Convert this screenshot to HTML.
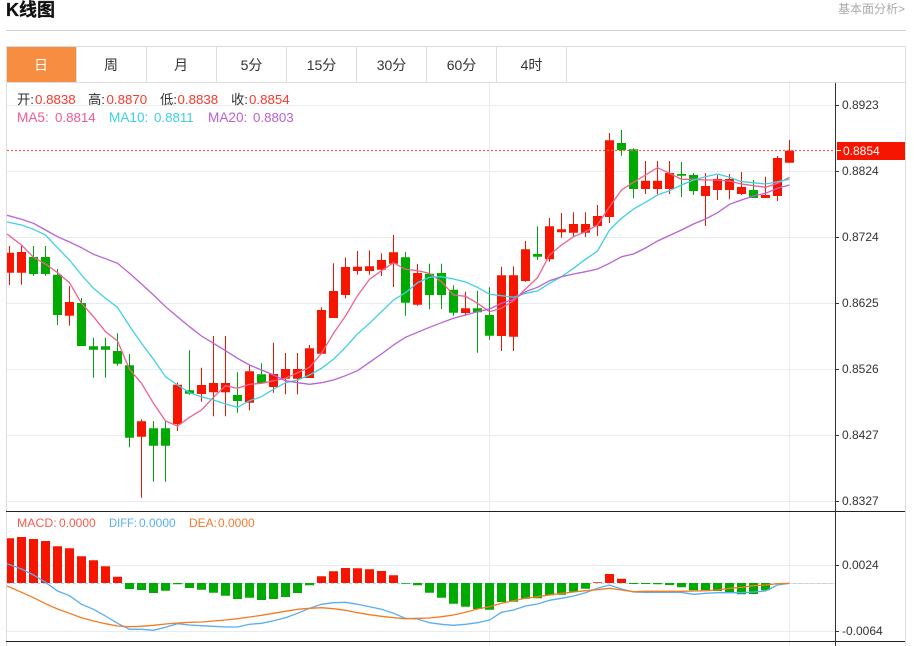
<!DOCTYPE html>
<html lang="zh"><head><meta charset="utf-8"><title>K线图</title>
<style>
html,body{margin:0;padding:0;background:#fff;width:914px;height:646px;overflow:hidden}
svg{display:block;position:absolute;left:0;top:0}
text{font-family:"Liberation Sans","Noto Sans CJK SC",sans-serif}
</style></head><body>
<svg width="914" height="646" viewBox="0 0 914 646" xmlns="http://www.w3.org/2000/svg">
<defs><clipPath id="c"><rect x="7" y="83" width="828" height="563"/></clipPath></defs>
<text x="6" y="16" font-size="18" font-weight="700" fill="#111" stroke="#111" stroke-width=".3">K线图</text>
<text x="838" y="13" font-size="12" fill="#aaa">基本面分析&gt;</text>
<path d="M6 30.5H906" stroke="#d0d0d0" fill="none"/>
<!-- tabs -->
<rect x="7" y="47" width="69" height="35" fill="#f68d41"/>
<path d="M6 46.5H906M6 82.5H906M6.5 46V646M905.500 46V646M76.5 47V82M146.5 47V82M216.5 47V82M286.5 47V82M356.5 47V82M426.5 47V82M496.5 47V82M566.5 47V82" stroke="#dddddd" fill="none"/>
<g font-size="14" fill="#333" text-anchor="middle">
<text x="41" y="70" fill="#fff">日</text><text x="111" y="70">周</text><text x="181" y="70">月</text><text x="251.5" y="70">5分</text><text x="321.5" y="70">15分</text><text x="391.5" y="70">30分</text><text x="461.5" y="70">60分</text><text x="531.5" y="70">4时</text>
</g>
<!-- grid -->
<path d="M7 105.5H835M7 171.5H835M7 237.5H835M7 303.5H835M7 369.5H835M7 435.5H835M7 501.5H835M7 565.5H835M7 631.5H835M489.5 83V646M789.5 83V646" stroke="#e6edf2" fill="none"/>
<path d="M7 583.5H835" stroke="#a8daf0" stroke-dasharray="3 3" fill="none"/>
<path d="M790 583.5H835" stroke="#f3b4a8" stroke-dasharray="3 3" fill="none" opacity=".6"/>
<g clip-path="url(#c)">
<!-- wicks -->
<path fill="none" stroke="#ee1500" d="M9.5 246V285M21.5 246V284.7M69.5 286V325.7M141.5 419.3V497.7M177.5 382.3V431M201.5 367.7V401.7M213.5 336V416.3M225.5 336V416.3M249.5 365.3V410.3M273.5 342.7V392.7M285.5 353V394.3M297.5 353V394.3M309.5 345V378M321.5 307.3V353.7M333.5 263.3V318M345.5 257.7V298.3M357.5 251V274.7M369.5 250.3V274.7M381.5 253.3V276M393.5 235V287M417.5 264V305.7M465.5 291.7V315.7M501.5 266.7V351M513.5 266.3V351M525.5 241V281.7M549.5 218V261.7M561.5 213V237.7M573.5 212.3V237M585.5 212.3V237M597.5 205V236M609.5 133V223M645.5 161V194M657.5 161V194M669.5 161V194M705.5 173V226M717.5 175V200M729.5 174V199.3M741.5 172V195M765.5 176.7V198M777.5 156V201M789.5 140V162.7"/>
<path fill="none" stroke="#009f10" d="M33.5 246V275.7M45.5 246V275.7M57.5 269V325M81.5 298V346M93.5 337.7V377.7M105.5 337.7V377.7M117.5 333.3V365.7M129.5 354V447.3M153.5 421V481.7M165.5 421V481.7M189.5 350.3V394.7M237.5 372.3V412.7M261.5 363.3V384M405.5 252V315.7M429.5 263.7V309.3M441.5 263.7V309M453.5 285.3V315.7M477.5 291V352.7M489.5 287.3V339.7M537.5 226.3V260M621.5 130V155.7M633.5 148.3V198.3M681.5 162V197M693.5 173V195M753.5 180V198"/>
<!-- bodies -->
<path fill="#f61600" d="M5 252.7h9V272.7h-9zM17 252h9V272.7h-9zM65 302h9V315.7h-9zM137 421.3h9V436.7h-9zM173 384.7h9V424h-9zM197 385h9V394h-9zM209 383h9V392.3h-9zM221 383h9V392.3h-9zM245 371.3h9V402.7h-9zM269 374h9V387h-9zM281 369h9V378.7h-9zM293 369h9V378.7h-9zM305 348.3h9V378h-9zM317 310h9V353.7h-9zM329 291h9V318h-9zM341 267h9V295h-9zM353 266.7h9V271h-9zM365 266.3h9V271h-9zM377 260h9V269.7h-9zM389 252.3h9V263.7h-9zM413 273h9V304.7h-9zM461 308.3h9V313h-9zM497 275.3h9V336h-9zM509 275.3h9V336.7h-9zM521 249.3h9V281h-9zM545 226.3h9V259.3h-9zM557 229.3h9V232.3h-9zM569 224h9V232.7h-9zM581 224h9V232.7h-9zM593 216h9V226h-9zM605 140.3h9V217h-9zM641 180.7h9V189h-9zM653 180.7h9V189h-9zM665 173h9V189h-9zM701 186h9V196h-9zM713 179h9V190h-9zM725 179h9V190h-9zM737 187h9V194h-9zM761 195h9V198h-9zM773 158h9V196h-9zM785 150.7h9V162.7h-9z"/>
<path fill="#00aa00" d="M29 257h9V274h-9zM41 257h9V274h-9zM53 274.7h9V315h-9zM77 303h9V346h-9zM89 346.3h9V349.7h-9zM101 346.3h9V349.7h-9zM113 351h9V363.7h-9zM125 365.3h9V437.7h-9zM149 428.3h9V445.7h-9zM161 428.3h9V445.7h-9zM185 390.3h9V393.7h-9zM233 395h9V401h-9zM257 374.3h9V383.3h-9zM401 257.3h9V302.7h-9zM425 273.7h9V295h-9zM437 273h9V295h-9zM449 289.7h9V312.7h-9zM473 308.3h9V312.3h-9zM485 315h9V335.7h-9zM533 254h9V256.7h-9zM617 143h9V150.3h-9zM629 149.3h9V189h-9zM677 174h9V175.7h-9zM689 175h9V191h-9zM749 190h9V198h-9z"/>
<!-- MA lines -->
<polyline fill="none" stroke="#f0608f" stroke-width="1.3" points="7,234 21.5,245 33.5,257.3 45.5,264 57.5,272.7 69.5,282.7 81.5,303.3 93.5,316.7 105.5,331.7 117.5,341 129.5,369.3 141.5,383.3 153.5,403.3 165.5,421 177.5,426 189.5,417.3 201.5,410 213.5,397.3 225.5,385.7 237.5,388.3 249.5,384.3 261.5,383.3 273.5,380.7 285.5,378.3 297.5,372.7 309.5,367.3 321.5,353.3 333.5,333.3 345.5,316 357.5,295.7 369.5,279.3 381.5,270.7 393.5,262.7 405.5,269.3 417.5,270.7 429.5,273.3 441.5,281.7 453.5,295 465.5,296.3 477.5,303.3 489.5,311.7 501.5,308.3 513.5,300.7 525.5,289 537.5,277.7 549.5,255 561.5,245 573.5,236.7 585.5,231.7 597.5,225 609.5,206.7 621.5,190 633.5,182.3 645.5,175 657.5,167.7 669.5,173.3 681.5,179.3 693.5,179.3 705.5,180 717.5,180 729.5,181 741.5,184 753.5,185.7 765.5,187.3 777.5,183.3 789.5,177.3"/>
<polyline fill="none" stroke="#3fd0e4" stroke-width="1.3" points="7,222 21.5,225 33.5,229.3 45.5,235 57.5,247.7 69.5,260 81.5,275 93.5,288.3 105.5,298.3 117.5,307.3 129.5,326 141.5,343.3 153.5,359.3 165.5,376.7 177.5,385 189.5,392.7 201.5,396.7 213.5,400 225.5,404 237.5,407.3 249.5,400.7 261.5,396.7 273.5,389.3 285.5,382.7 297.5,380 309.5,375 321.5,368.3 333.5,359.3 345.5,347.3 357.5,334 369.5,323.3 381.5,311.7 393.5,300 405.5,292.7 417.5,282.7 429.5,277.3 441.5,276.7 453.5,279 465.5,282 477.5,287.3 489.5,294.3 501.5,295.7 513.5,297.3 525.5,293.3 537.5,291 549.5,283.3 561.5,276.7 573.5,268.3 585.5,259.3 597.5,251 609.5,230 621.5,218.3 633.5,209 645.5,202.3 657.5,195 669.5,190.7 681.5,185 693.5,180 705.5,176.7 717.5,174 729.5,177.3 741.5,181.7 753.5,182.7 765.5,184 777.5,181.7 789.5,179.3"/>
<polyline fill="none" stroke="#b962d4" stroke-width="1.3" points="7,215.3 21.5,219.3 33.5,223.3 45.5,230 57.5,236.7 69.5,242 81.5,247.7 93.5,254.3 105.5,258.7 117.5,263.3 129.5,273.3 141.5,284 153.5,295 165.5,306.7 177.5,316.7 189.5,326.7 201.5,336 213.5,343.3 225.5,350.7 237.5,358.3 249.5,365 261.5,370 273.5,375 285.5,380.7 297.5,382.7 309.5,384.3 321.5,382.7 333.5,380 345.5,375.7 357.5,370.7 369.5,362.3 381.5,354 393.5,345 405.5,337.3 417.5,332.3 429.5,327.3 441.5,322.7 453.5,318.3 465.5,315 477.5,311.7 489.5,309 501.5,303.3 513.5,299.3 525.5,291.7 537.5,287.3 549.5,280.7 561.5,276.7 573.5,274 585.5,271.7 597.5,269 609.5,263.3 621.5,256.7 633.5,254 645.5,248 657.5,241 669.5,235.5 681.5,230 693.5,224 705.5,219 717.5,212.7 729.5,204.3 741.5,200 753.5,196 765.5,193.3 777.5,188.3 789.5,185"/>
<!-- price line -->
<path d="M7 150.5H835" stroke="#f66055" stroke-width="1.3" stroke-dasharray="2 2" fill="none"/>
<!-- MACD bars -->
<path fill="#f61600" d="M5 538.3h9V583h-9zM17 537h9V583h-9zM29 539h9V583h-9zM41 541h9V583h-9zM53 546.3h9V583h-9zM65 548.3h9V583h-9zM77 556.3h9V583h-9zM89 560.3h9V583h-9zM101 566.3h9V583h-9zM113 576.7h9V583h-9zM317 576.3h9V583h-9zM329 571.3h9V583h-9zM341 568h9V583h-9zM353 568.3h9V583h-9zM365 569.3h9V583h-9zM377 571h9V583h-9zM389 575.3h9V583h-9zM593 582.3h9V583h-9zM605 574h9V583h-9zM617 578.7h9V583h-9z"/>
<path fill="#00aa00" d="M125 583h9V589h-9zM137 583h9V590h-9zM149 583h9V593h-9zM161 583h9V590.7h-9zM173 583h9V584.3h-9zM185 583h9V588h-9zM197 583h9V589.7h-9zM209 583h9V592.7h-9zM221 583h9V595.7h-9zM233 583h9V599h-9zM245 583h9V597.7h-9zM257 583h9V600h-9zM269 583h9V599h-9zM281 583h9V597h-9zM293 583h9V593h-9zM305 583h9V585.3h-9zM401 583h9V583.7h-9zM413 583h9V585.3h-9zM425 583h9V592.7h-9zM437 583h9V597.7h-9zM449 583h9V603.7h-9zM461 583h9V606.7h-9zM473 583h9V609h-9zM485 583h9V609.7h-9zM497 583h9V602h-9zM509 583h9V601.7h-9zM521 583h9V598.7h-9zM533 583h9V598.3h-9zM545 583h9V595.3h-9zM557 583h9V594.7h-9zM569 583h9V591.7h-9zM581 583h9V588.7h-9zM629 583h9V584h-9zM641 583h9V584h-9zM653 583h9V584.3h-9zM665 583h9V585h-9zM677 583h9V587.3h-9zM689 583h9V590.3h-9zM701 583h9V590h-9zM713 583h9V591h-9zM725 583h9V592.3h-9zM737 583h9V594.3h-9zM749 583h9V594h-9zM761 583h9V590.3h-9z"/>
<polyline fill="none" stroke="#58aef2" stroke-width="1.3" points="7,563.7 21.5,569 33.5,575 45.5,582.3 57.5,591 69.5,595.7 81.5,604.3 93.5,609.3 105.5,616 117.5,623.3 129.5,629.3 141.5,629.3 153.5,630.3 165.5,627.3 177.5,623.7 189.5,625 201.5,625.7 213.5,626.3 225.5,627 237.5,627 249.5,624.3 261.5,623.3 273.5,620.7 285.5,617.7 297.5,613.3 309.5,608.3 321.5,604.3 333.5,602.7 345.5,602.3 357.5,604.3 369.5,606.7 381.5,609.3 393.5,613.3 405.5,618.3 417.5,619 429.5,622.7 441.5,624.3 453.5,625.3 465.5,624.3 477.5,622.7 489.5,620 501.5,612.3 513.5,610 525.5,606 537.5,604 549.5,600.3 561.5,598.3 573.5,596 585.5,592.7 597.5,588.3 609.5,585 621.5,589 633.5,592 645.5,592.3 657.5,592.3 669.5,592.3 681.5,592.3 693.5,594.3 705.5,593.3 717.5,592.7 729.5,592.7 741.5,592.7 753.5,592 765.5,591 777.5,585 789.5,583.3"/>
<polyline fill="none" stroke="#f57a22" stroke-width="1.3" points="7,586 21.5,592.3 33.5,597.7 45.5,603.7 57.5,609 69.5,613.3 81.5,617.7 93.5,621 105.5,623.7 117.5,626 129.5,626.7 141.5,626.3 153.5,625.3 165.5,624 177.5,623 189.5,622.3 201.5,622 213.5,621 225.5,620 237.5,618.7 249.5,617 261.5,615.3 273.5,613.3 285.5,611.3 297.5,609.3 309.5,608.3 321.5,607.7 333.5,608.7 345.5,610.3 357.5,612.7 369.5,614.7 381.5,616.3 393.5,617.7 405.5,618.7 417.5,618.3 429.5,618 441.5,616.7 453.5,615 465.5,612.3 477.5,609 489.5,606.7 501.5,603.3 513.5,600.7 525.5,598.3 537.5,596.7 549.5,595 561.5,593.3 573.5,592 585.5,590.7 597.5,589.7 609.5,588.3 621.5,590 633.5,591.7 645.5,591.3 657.5,591.3 669.5,591.3 681.5,591.3 693.5,591 705.5,590.7 717.5,590 729.5,588.3 741.5,587.3 753.5,585.7 765.5,585 777.5,583.7 789.5,583.3"/>
</g>
<!-- separators & axis -->
<path d="M6 511.5H905M6 641.5H905" stroke="#222" fill="none"/>
<path d="M835.5 83V646" stroke="#333" fill="none"/>
<path d="M836 105.5H839M836 171.5H839M836 237.5H839M836 303.5H839M836 369.5H839M836 435.5H839M836 501.5H839M836 565.5H839M836 631.5H839" stroke="#333" fill="none"/>
<g font-size="12" fill="#333">
<text x="842" y="109">0.8923</text><text x="842" y="175">0.8824</text><text x="842" y="241">0.8724</text><text x="842" y="307">0.8625</text><text x="842" y="373">0.8526</text><text x="842" y="439">0.8427</text><text x="842" y="505">0.8327</text><text x="842" y="569">0.0024</text><text x="842" y="635">-0.0064</text>
</g>
<rect x="837" y="142" width="68" height="18" fill="#f61600"/>
<path d="M837 150.5H841" stroke="#fff" fill="none"/>
<text x="843" y="155" font-size="12" fill="#fff">0.8854</text>
<!-- legend -->
<g font-size="13.3">
<g fill="#333"><text x="17" y="104">开:</text><text x="88" y="104">高:</text><text x="160" y="104">低:</text><text x="231" y="104">收:</text></g>
<g fill="#f8392c"><text x="35" y="104">0.8838</text><text x="106.500" y="104">0.8870</text><text x="177.500" y="104">0.8838</text><text x="249" y="104">0.8854</text></g>
<g fill="#ee5a92"><text x="17" y="122" font-size="13.6">MA5:</text><text x="55" y="122">0.8814</text></g>
<g fill="#3ccfe2"><text x="109" y="122" font-size="13.6">MA10:</text><text x="154" y="122">0.8811</text></g>
<g fill="#b860d4"><text x="208" y="122" font-size="13.6">MA20:</text><text x="253" y="122">0.8803</text></g>
</g>
<g font-size="12">
<g fill="#f55a50"><text x="17" y="527" font-size="12.3">MACD:</text><text x="59" y="527">0.0000</text></g>
<g fill="#58aef2"><text x="109" y="527" textLength="28" lengthAdjust="spacingAndGlyphs">DIFF:</text><text x="139" y="527">0.0000</text></g>
<g fill="#f57a30"><text x="189" y="527">DEA:</text><text x="218" y="527">0.0000</text></g>
</g>
</svg>
</body></html>
